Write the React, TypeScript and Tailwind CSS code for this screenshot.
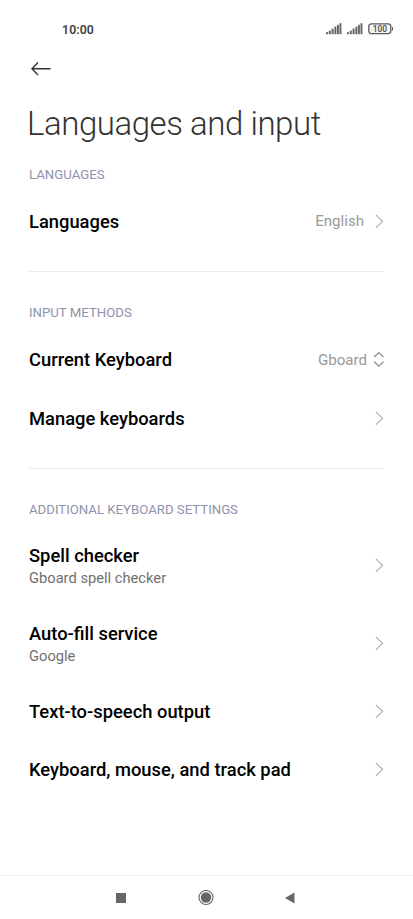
import React from 'react';

interface Row {
  label: string;
  summary?: string;
  value?: string;
  picker?: boolean;
}

interface Section {
  title: string;
  rows: Row[];
}

const SECTIONS: Section[] = [
  {
    title: 'LANGUAGES',
    rows: [{ label: 'Languages', value: 'English' }]
  },
  {
    title: 'INPUT METHODS',
    rows: [
      { label: 'Current Keyboard', value: 'Gboard', picker: true },
      { label: 'Manage keyboards' }
    ]
  },
  {
    title: 'ADDITIONAL KEYBOARD SETTINGS',
    rows: [
      { label: 'Spell checker', summary: 'Gboard spell checker' },
      { label: 'Auto-fill service', summary: 'Google' },
      { label: 'Text-to-speech output' },
      { label: 'Keyboard, mouse, and track pad' }
    ]
  }
];

const SignalIcon = () => (
  <svg width="16" height="12" viewBox="0 0 16 12" fill="#666">
    <rect x="0" y="9.2" width="2" height="2" />
    <rect x="2.8" y="7.6" width="2" height="3.6" />
    <rect x="5.6" y="5.6" width="2" height="5.6" />
    <rect x="8.4" y="3.6" width="2" height="7.6" />
    <rect x="11" y="1.8" width="1.9" height="9.4" />
    <rect x="13.5" y="0.2" width="1.9" height="11" />
  </svg>
);

const BatteryIcon = () => (
  <svg width="26" height="12" viewBox="0 0 26 12">
    <rect x="0.8" y="0.8" width="22" height="9.9" rx="2.6" fill="#f4f4f4" stroke="#5a5a5a" strokeWidth="1.3" />
    <path d="M24 4h1v3.5h-1z" fill="#5a5a5a" />
    <text x="11.8" y="8.8" textAnchor="middle" fontSize="8.4" fontWeight="500" fill="#4a4a4a">100</text>
  </svg>
);

const ChevronIcon = () => (
  <svg width="9" height="16" viewBox="0 0 9 16" fill="none" stroke="#aaa" strokeWidth="1.1">
    <path d="M0.8 0.9 7.6 7.3 0.8 13.8" />
  </svg>
);

const PickerIcon = () => (
  <svg width="11" height="16" viewBox="0 0 11 16" fill="none" stroke="#8e8e8e" strokeWidth="1.3">
    <path d="m1.2 5 4.6-4.4 4.6 4.4M1.2 9.8l4.6 4.4 4.6-4.4" />
  </svg>
);

const StatusBar = () => (
  <div className="flex h-[58px] items-center justify-between pl-[62px] pr-[19px]">
    <span className="mt-[2px] text-[12.3px] font-semibold tracking-[0.1px] text-[#444]">10:00</span>
    <div className="flex items-center gap-[5px]">
      <SignalIcon />
      <SignalIcon />
      <BatteryIcon />
    </div>
  </div>
);

const SettingRow = ({ row }: { row: Row }) => (
  <div className={`flex items-center justify-between ${row.summary ? 'h-[77.5px]' : 'h-[58.5px]'}`}>
    <div>
      <p className={`text-[18.35px] leading-[22px] font-medium text-black ${row.summary ? 'mt-[2px]' : ''}`}>{row.label}</p>
      {row.summary && <p className="text-[14.7px] leading-[22px] text-[#707070]">{row.summary}</p>}
    </div>
    <div className={`flex items-center ${row.picker ? 'gap-[6px]' : 'gap-[11px]'}`}>
      {row.value && <span className="text-[15.1px] text-[#999]">{row.value}</span>}
      {row.picker ? <PickerIcon /> : <ChevronIcon />}
    </div>
  </div>
);

export default function App() {
  return (
    <div className="flex h-[919px] w-[413px] flex-col bg-white font-['Roboto',sans-serif]">
      <StatusBar />
      <header className="pl-[27px]">
        <svg className="ml-[4px] mt-[3px]" width="20" height="16" viewBox="0 0 20 16" fill="none" stroke="#333" strokeWidth="1.4">
          <path d="M19.5 7.7H1M7 1.5 1 7.7l6 6.2" />
        </svg>
        <h1 className="mt-[25px] text-[33px] leading-[44px] font-light tracking-[-0.45px] text-[#333]">Languages and input</h1>
      </header>
      <main className="flex-1 px-[29px]">
        {SECTIONS.map((section, i) => (
          <section key={section.title} className={i > 0 ? 'mt-[19.75px] border-t border-[#ebebeb] pt-[31px]' : 'pt-[19px]'}>
            <h2 className={`text-[13.2px] leading-[20px] text-[#8e92ad] ${i > 0 ? 'mb-[8px]' : 'mb-[7.5px]'}`}>{section.title}</h2>
            {section.rows.map((row) => (
              <SettingRow key={row.label} row={row} />
            ))}
          </section>
        ))}
      </main>
      <nav className="flex h-[44px] items-center border-t border-[#f2f2f2] pl-[116px]">
        <div className="size-[10px] bg-[#666]" />
        <svg className="ml-[72px]" width="16" height="16" viewBox="0 0 16 16">
          <circle cx="8" cy="7.5" r="7" fill="none" stroke="#666" strokeWidth="1.1" />
          <circle cx="8" cy="7.5" r="5.2" fill="#666" />
        </svg>
        <svg className="ml-[71px]" width="10" height="12" viewBox="0 0 10 12" fill="#666">
          <path d="M9.5 0.5v11L0 6z" />
        </svg>
      </nav>
    </div>
  );
}
